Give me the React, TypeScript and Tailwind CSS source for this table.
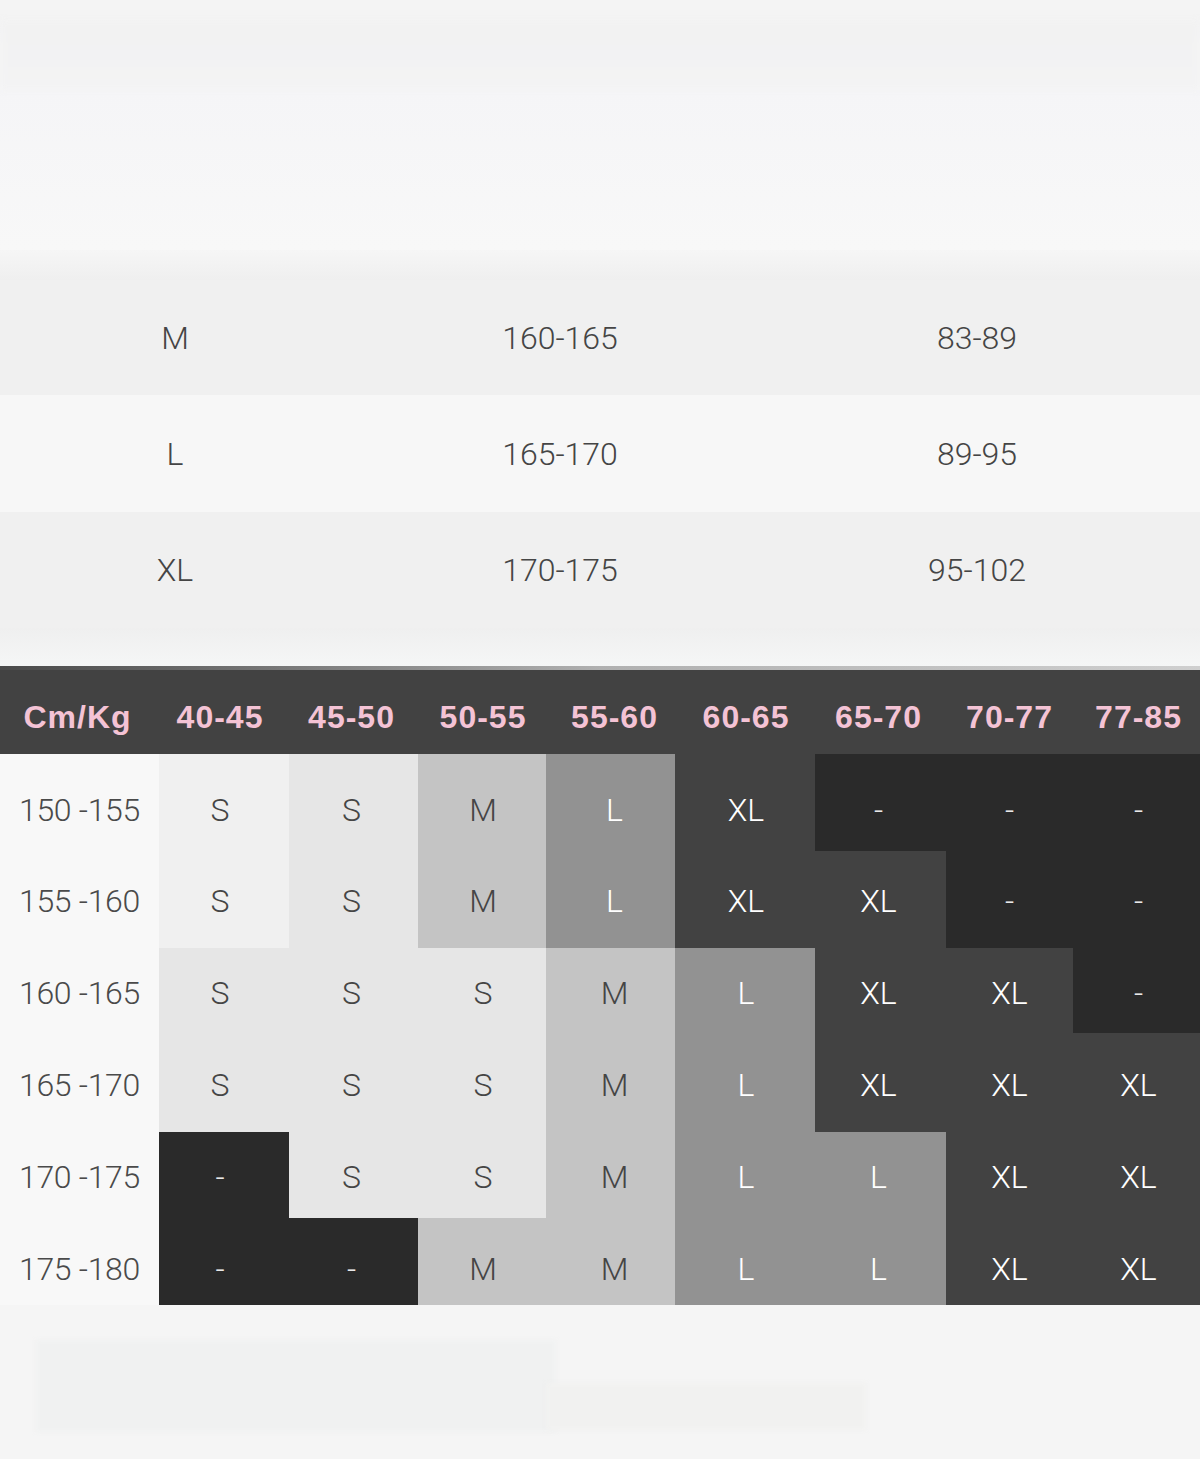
import React from "react";

type Cell = { t: string; bg: string };

const VL = "bg-[#f0f0f0] text-[#454545]";
const LT = "bg-[#e6e6e6] text-[#454545]";
const MD = "bg-[#c4c4c4] text-[#454545]";
const GR = "bg-[#929292] text-white";
const DK = "bg-[#424242] text-white";
const XD = "bg-[#2a2a2a] text-[#e8e8e8]";

const c = (t: string, bg: string): Cell => ({ t, bg });

// text in the picture is not quite centred in the coloured blocks
const shift = [
  "-translate-x-[4px]",
  "-translate-x-[2px]",
  "translate-x-[1px]",
  "translate-x-[4px]",
  "translate-x-[1px]",
  "-translate-x-[2px]",
  "",
  "translate-x-[2px]",
];

const sizeRows = [
  { size: "M", height: "160-165", bust: "83-89", bg: "bg-[#f0f0f0]", h: "h-[115px]" },
  { size: "L", height: "165-170", bust: "89-95", bg: "bg-[#f7f7f7]", h: "h-[117px]" },
  { size: "XL", height: "170-175", bust: "95-102", bg: "bg-[#f0f0f0]", h: "h-[116px]" },
];

const weights = ["40-45", "45-50", "50-55", "55-60", "60-65", "65-70", "70-77", "77-85"];

const chart: { label: string; row: string; cells: Cell[] }[] = [
  {
    label: "150 -155",
    row: "h-[97px] pt-[15px]",
    cells: [c("S", VL), c("S", LT), c("M", MD), c("L", GR), c("XL", DK), c("-", XD), c("-", XD), c("-", XD)],
  },
  {
    label: "155 -160",
    row: "h-[97px] pt-[3px]",
    cells: [c("S", VL), c("S", LT), c("M", MD), c("L", GR), c("XL", DK), c("XL", DK), c("-", XD), c("-", XD)],
  },
  {
    label: "160 -165",
    row: "h-[85px] pt-[5px]",
    cells: [c("S", LT), c("S", LT), c("S", LT), c("M", MD), c("L", GR), c("XL", DK), c("XL", DK), c("-", XD)],
  },
  {
    label: "165 -170",
    row: "h-[99px] pt-[5px]",
    cells: [c("S", LT), c("S", LT), c("S", LT), c("M", MD), c("L", GR), c("XL", DK), c("XL", DK), c("XL", DK)],
  },
  {
    label: "170 -175",
    row: "h-[86px] pt-[4px]",
    cells: [c("-", XD), c("S", LT), c("S", LT), c("M", MD), c("L", GR), c("L", GR), c("XL", DK), c("XL", DK)],
  },
  {
    label: "175 -180",
    row: "h-[87px] pt-[15px]",
    cells: [c("-", XD), c("-", XD), c("M", MD), c("M", MD), c("L", GR), c("L", GR), c("XL", DK), c("XL", DK)],
  },
];

const cols = "grid grid-cols-[159px_130px_129px_128px_129px_140px_131px_127px_127px]";

export default function App() {
  return (
    <div className="w-[1200px] h-[1459px] overflow-hidden bg-[#f5f5f5] font-['Roboto',sans-serif]">
      {/* blurred header image */}
      <div className="h-[280px] bg-linear-to-b from-[#f4f4f4] via-[#f7f7f8] to-[#f0f0f0] flex flex-col">
        <div className="h-[20px] bg-[#f4f4f4]" />
        <div className="h-[70px] bg-linear-to-b from-[#f2f2f2] to-[#f3f3f4] blur-[3px]" />
        <div className="flex-1 bg-linear-to-b from-[#f5f5f7] to-[#f8f8f8]" />
        <div className="h-[30px] bg-linear-to-b from-[#f6f6f6] to-[#efefef]" />
      </div>

      {/* size table */}
      <div>
        {sizeRows.map((r) => (
          <div
            key={r.size}
            className={`grid grid-cols-[350px_420px_414px] items-center ${r.bg} ${r.h} text-[32px] font-light text-[#454545] leading-none`}
          >
            <div className="text-center">{r.size}</div>
            <div className="text-center">{r.height}</div>
            <div className="text-center">{r.bust}</div>
          </div>
        ))}
      </div>

      <div className="h-[38px] bg-linear-to-b from-[#efefef] to-[#f5f6f6]" />
      <div className="h-[4px] bg-linear-to-r from-[#4a4a4a] via-[#b0b0b0] to-[#cfcfcf]" />

      {/* weight / height chart */}
      <div className={`${cols} h-[84px] bg-[#424242] items-start pt-[31px] font-['Liberation_Sans',sans-serif] font-bold text-[32px] leading-none text-[#f4c3d5] tracking-[1px]`}>
        <div className="text-center -translate-x-[2px]">Cm/Kg</div>
        {weights.map((w, i) => (
          <div key={w} className={`text-center ${shift[i]}`}>
            {w}
          </div>
        ))}
      </div>

      {chart.map((r) => (
        <div key={r.label} className={cols}>
          <div className={`flex items-center justify-center bg-[#f8f8f8] text-[#4a4a4a] text-[32px] font-light leading-none tracking-[-0.3px] ${r.row}`}>
            {r.label}
          </div>
          {r.cells.map((cell, i) => (
            <div
              key={i}
              className={`flex items-center justify-center text-[32px] font-light leading-none ${r.row} ${cell.bg}`}
            >
              <span className={shift[i]}>{cell.t}</span>
            </div>
          ))}
        </div>
      ))}

      {/* blurred footer */}
      <div className="h-[154px]">
        <div className="flex pt-[35px] pl-[36px]">
          <div className="w-[520px] h-[92px] bg-[#f0f1f1] blur-[2px]" />
          <div className="w-[320px] h-[47px] mt-[43px] -ml-[10px] bg-[#f1f1f0] blur-[2px]" />
        </div>
      </div>
    </div>
  );
}
